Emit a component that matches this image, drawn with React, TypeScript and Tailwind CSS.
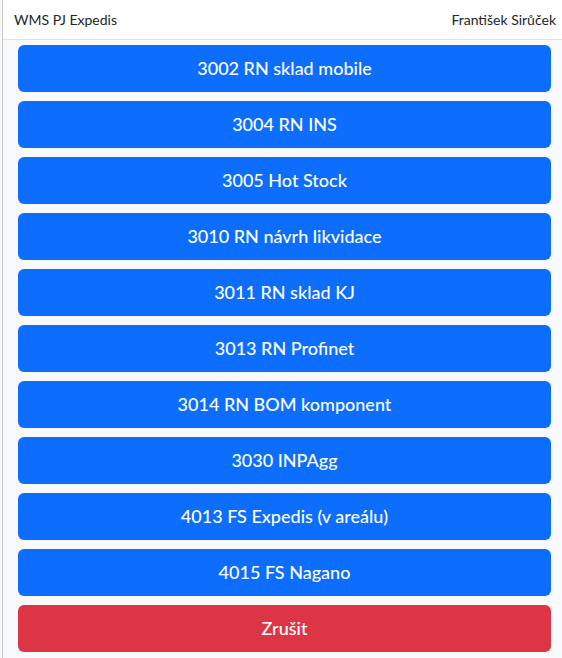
const items = [
  "3002 RN sklad mobile",
  "3004 RN INS",
  "3005 Hot Stock",
  "3010 RN návrh likvidace",
  "3011 RN sklad KJ",
  "3013 RN Profinet",
  "3014 RN BOM komponent",
  "3030 INPAgg",
  "4013 FS Expedis (v areálu)",
  "4015 FS Nagano",
];

export default function App() {
  return (
    <div className="min-h-[658px] bg-[#f8f9fa] pl-[2px] font-['Lato','Noto_Sans',sans-serif] text-[#212529]">
      <div className="min-h-[658px] border-l border-[#c8c8c8]">
        <header className="flex h-[40px] items-center justify-between border-b border-[#dee2e6] bg-white pl-[11px] pr-[6px] text-[14px]">
          <span>WMS PJ Expedis</span>
          <span>František Sirůček</span>
        </header>
        <div className="flex flex-col gap-[9px] pl-[15px] pr-[11px] pt-[5px]">
          {items.map((item) => (
            <button
              key={item}
              className="h-[47px] rounded-md bg-[#0d6efd] text-[18px] font-medium text-white"
            >
              {item}
            </button>
          ))}
          <button className="h-[47px] rounded-md bg-[#dc3545] text-[18px] font-medium text-white">
            Zrušit
          </button>
        </div>
      </div>
    </div>
  );
}
